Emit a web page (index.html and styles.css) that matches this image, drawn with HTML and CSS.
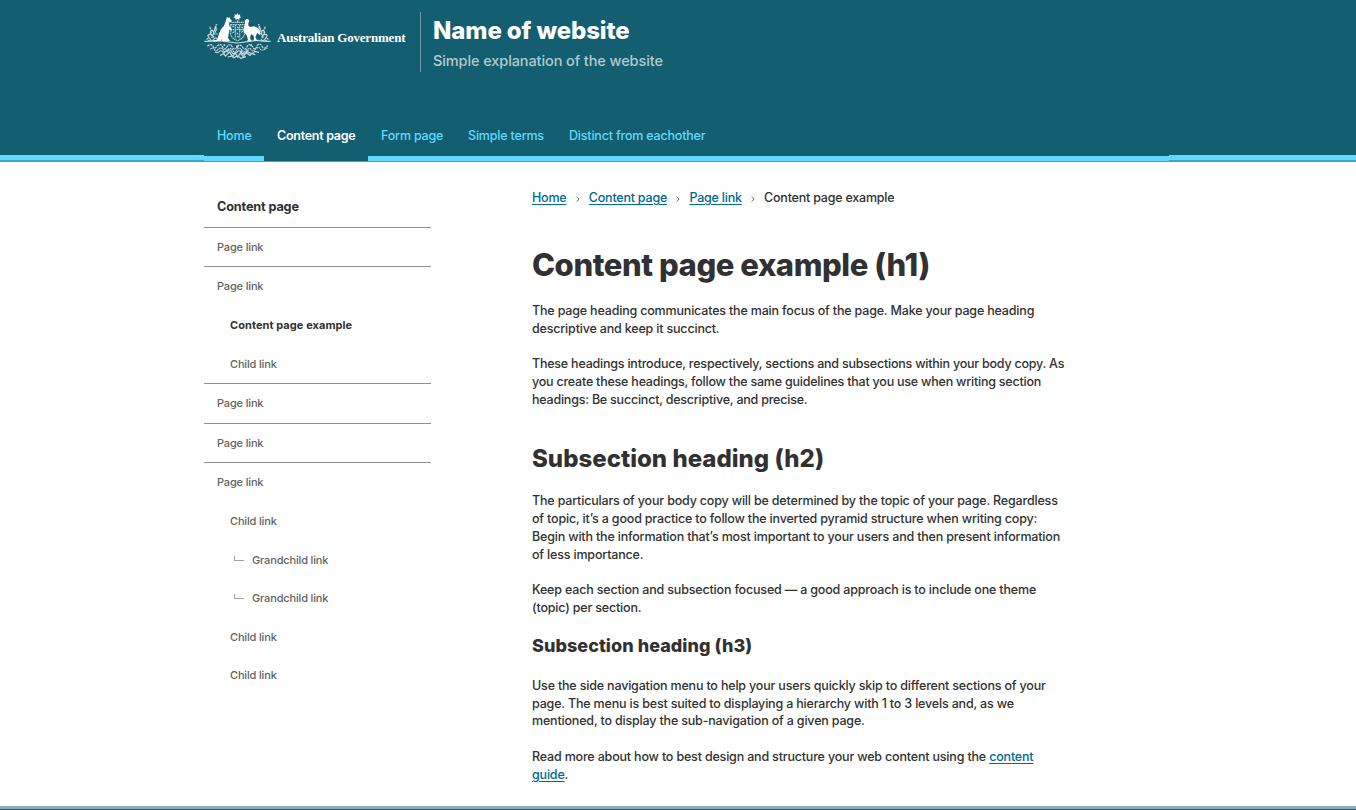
FILE: index.html
```html
<!DOCTYPE html>
<html lang="en">
<head>
<meta charset="utf-8">
<title>Content page example</title>
<link rel="stylesheet" href="styles.css">
</head>
<body>
<header class="header">
  <div class="container brand">
    <svg class="crest" viewBox="27 38 201 138" aria-label="Coat of arms">
      <g fill="none" stroke="#c3d8dc" stroke-width="3.6">
        <path d="M107 73h41v29q-3 13-20 19-18-6-21-19zM108 88h39M121 74v40M134 74v40M109 66h38" stroke-dasharray="4 1.6"/>
        <path d="M112 80l5-3M112 97l6-3M126 80l5 4M125 97l5 5M139 79l5 4M139 96l5-3M127 107l4 4M128 60v6"/>
        <path d="M28 123q20 1 39-3l22 3 38 5 38-5 22-3q20 4 40 3"/>
        <path d="M35 118q5-10 12 0 4 8 10-2 4-8 12 2M43 113q-9-10 1-11 10 0 7 11 1-16 11-11M50 104q-7-8 0-15 9 5 4 15M57 93l5-16 2 10-4 10M47 87l-3-8M62 75l4-3"/>
        <path d="M220 118q-5-10-12 0-4 8-10-2M212 113q9-10-1-11-10 0-7 11-1-16-11-11M205 104q7-8 0-15-9 5-4 15M198 93l-5-16-2 10 4 10M208 87l3-8M193 75l-4-3"/>
        <path d="M37 138q12-10 17 0t13-1q11-10 16 3t14-2q8-11 15 2t15-2q8-9 16 3t14-4q8-10 16 3t14-5q7-9 14 3t17-3" stroke-dasharray="7 2"/>
        <path d="M46 147q10-8 13 1t13-4q12-3 13 6t14-3q11-7 15 4t13-5q10-5 14 5t14-3q11-7 15 1t13-5q9-6 13 2t21-4" stroke-dasharray="5 1.5"/>
        <path d="M60 155q9 5 14-3 8-3 11 6l14-8q9-5 13 8 7 7 16-5 8-4 14 7 9 2 13-7l12 6q8 3 12-6l13 3M75 165l12-5 4 7 13-12 8 14 9-11 7 12 8-12 9 11 8-12 12 8 5-6 11 5M98 170l14-3 5 5 11-5 10 7 15-5M117 157l9 8M142 151l-9 12M94 148l8 11M160 149l-9 11"/>
      </g>
      <g fill="#fff">
        <path d="M127 38l3 6 6-2-2 6 5 3-6 2 0 6-6-3-6 3 0-6-6-2 5-3-2-6 6 2z"/>
        <path d="M96 49l4 5 3-5 2 6 5 5-1 5-7 2 1 10 7 8 1 6-8-3-2 14-2 10 6 10H82l-1-7-4 8-22 1 1-4 11-2 5-18 6-13 9-11 4-10z"/>
        <path d="M149 62l5-6 6 1 3 5-3 6 0 8 6 4 11-2 11 4 6 9 1 13-8-6-3 5-3 8 6 10h-13l3-4-1-11-7-4-4 8 2 8 4 4h-15l3-4-4-13-7-8-3-9 4-12 1-7z"/>
      </g>
      <g fill="#bed5da">
        <circle cx="42" cy="121" r="3"/><circle cx="55" cy="109" r="3"/><circle cx="66" cy="101" r="2.5"/><circle cx="213" cy="121" r="3"/><circle cx="202" cy="110" r="3"/><circle cx="47" cy="96" r="3"/><circle cx="208" cy="96" r="3"/><circle cx="88" cy="134" r="3"/><circle cx="168" cy="135" r="3"/><circle cx="127" cy="139" r="4"/>
      </g>
    </svg>
    <span class="gov">Australian Government</span>
    <div class="titles">
      <div class="site-title">Name of website</div>
      <div class="site-sub">Simple explanation of the website</div>
    </div>
  </div>
  <nav class="mainnav">
    <div class="container tabs">
      <a class="tab t1">Home</a><a class="tab t2 active">Content page</a><a class="tab t3">Form page</a><a class="tab t4">Simple terms</a><a class="tab t5">Distinct from eachother</a>
    </div>
  </nav>
</header>
<div class="container page">
  <aside class="side">
    <div class="row title"><span>Content page</span></div>
    <div class="row line"><span>Page link</span></div>
    <div class="row"><span>Page link</span></div>
    <div class="row child current"><span>Content page example</span></div>
    <div class="row child line"><span>Child link</span></div>
    <div class="row line tall"><span>Page link</span></div>
    <div class="row line"><span>Page link</span></div>
    <div class="row"><span>Page link</span></div>
    <div class="row child"><span>Child link</span></div>
    <div class="row grand"><i class="elbow"></i><span>Grandchild link</span></div>
    <div class="row grand short"><i class="elbow"></i><span>Grandchild link</span></div>
    <div class="row child short"><span>Child link</span></div>
    <div class="row child short"><span>Child link</span></div>
  </aside>
  <main class="content">
    <div class="crumbs">
      <a>Home</a><svg class="sep" viewBox="0 0 4 6"><path d="M.7.5 3.2 3 .7 5.5"/></svg><a>Content page</a><svg class="sep" viewBox="0 0 4 6"><path d="M.7.5 3.2 3 .7 5.5"/></svg><a>Page link</a><svg class="sep" viewBox="0 0 4 6"><path d="M.7.5 3.2 3 .7 5.5"/></svg><span>Content page example</span>
    </div>
    <h1>Content page example (h1)</h1>
    <p>The page heading communicates the main focus of the page. Make your page heading<br>descriptive and keep it succinct.</p>
    <p class="tight">These headings introduce, respectively, sections and subsections within your body copy. As<br>you create these headings, follow the same guidelines that you use when writing section<br>headings: Be succinct, descriptive, and precise.</p>
    <h2>Subsection heading (h2)</h2>
    <p>The particulars of your body copy will be determined by the topic of your page. Regardless<br>of topic, it’s a good practice to follow the inverted pyramid structure when writing copy:<br>Begin with the information that’s most important to your users and then present information<br>of less importance.</p>
    <p>Keep each section and subsection focused — a good approach is to include one theme<br>(topic) per section.</p>
    <h3>Subsection heading (h3)</h3>
    <p>Use the side navigation menu to help your users quickly skip to different sections of your<br>page. The menu is best suited to displaying a hierarchy with 1 to 3 levels and, as we<br>mentioned, to display the sub-navigation of a given page.</p>
    <p>Read more about how to best design and structure your web content using the <a>content</a><br><a>guide</a>.</p>
  </main>
</div>
<footer class="footer"></footer>
</body>
</html>
```
FILE: styles.css
```css
* { box-sizing: border-box; }
body {
  margin: 0;
  height: 810px;
  overflow: hidden;
  display: flex;
  flex-direction: column;
  background: #fff;
  color: #313131;
  font: 450 12.5px/17.85px Inter, "Liberation Sans", sans-serif;
  letter-spacing: -0.18px;
  white-space: nowrap;
}
.container { width: 965px; margin-left: 204px; }
.header {
  height: 162px;
  flex: none;
  display: flex;
  flex-direction: column;
  justify-content: space-between;
  background: #135e70;
}
.brand { display: flex; padding-top: 12px; }
.crest { width: 67px; height: 46px; margin-top: 1px; flex: none; }
.gov {
  width: 143px;
  margin: 16px 0 0 6px;
  color: #fff;
  font: bold 13px/20px "Liberation Serif", serif;
  letter-spacing: -0.2px;
}
.titles { height: 60px; padding-left: 12px; border-left: 1px solid #6a9ba7; }
.site-title { margin-top: 3px; color: #fff; font-size: 24px; font-weight: 800; line-height: 32px; letter-spacing: -0.12px; }
.site-sub { margin-top: 4px; color: #b1cbd1; font-size: 14.5px; line-height: 20px; letter-spacing: -0.1px; }
.mainnav {
  height: 47px;
  background: linear-gradient(#135e70 0 40px, #61daff 40px 45px, #3caac3 45px 46px, #5f969f 46px 47px);
}
.tabs {
  height: 46px;
  display: flex;
  letter-spacing: -0.19px;
  background: linear-gradient(#135e70 0 41px, #61daff 41px 46px);
}
.tab { height: 41px; padding: 12px 0 0 13px; color: #61daff; line-height: 18px; background: #135e70; }
.active { height: 46px; color: #fff; font-weight: 600; letter-spacing: -0.27px; }
.t1 { width: 60px; }
.t2 { width: 104px; }
.t3 { width: 87px; }
.t4 { width: 101px; }
.page { display: flex; flex: 1; }
.side { width: 227px; margin: 25px 101px 0 0; font-size: 11px; color: #626262; letter-spacing: -0.16px; }
.row { height: 39px; display: flex; align-items: center; padding: 1px 0 0 13px; }
.title { height: 41px; padding-top: 0; border-bottom: 1px solid #8f8f8f; font-size: 12.7px; font-weight: 700; color: #313131; }
.line { border-bottom: 1px solid #8f8f8f; padding-top: 2px; }
.tall { height: 40px; padding-top: 0; }
.short { height: 38.5px; padding-top: 0; }
.child { padding-left: 26px; }
.current { color: #313131; font-weight: 700; letter-spacing: 0.07px; }
.grand { padding-left: 30px; }
.elbow { width: 10px; height: 5px; margin: -5px 8px 0 0; border: solid #a2a2a2; border-width: 0 0 1px 1px; }
.content { flex: 1; padding-top: 27px; }
.crumbs { display: flex; align-items: center; height: 18px; }
.crumbs a, p a { color: #00698f; text-decoration: underline; text-underline-offset: 2px; }
.crumbs a, .crumbs span { letter-spacing: -0.22px; }
.sep { width: 4px; height: 6px; margin: 2px 9.2px 0; fill: none; stroke: #666; stroke-width: 1; }
p { margin: 0 0 17.85px; }
.tight { letter-spacing: -0.22px; }
h1, h2, h3 { margin: 0; font-weight: 780; }
h1 { margin: 38px 0 17.7px; font-size: 31px; line-height: 39px; letter-spacing: -0.43px; }
h2 { margin: 34.3px 0 17px; font-size: 24px; line-height: 32px; letter-spacing: 0.02px; }
h3 { margin: -1px 0 18.9px; font-size: 18px; line-height: 24px; letter-spacing: 0.05px; }
.footer { flex: none; height: 4px; background: #135e70; border-top: 3px solid #89afb8; }
```
